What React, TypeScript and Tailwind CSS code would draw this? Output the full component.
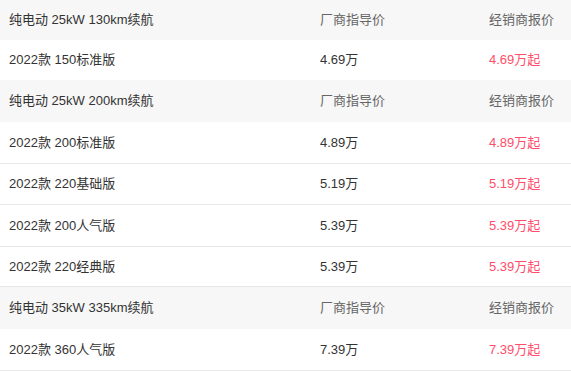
import React from "react";

/* ---------------- DATA ---------------- */
interface Trim {
  name: string;
  guide: string;
  dealer: string;
}

interface Group {
  title: string;
  h: string;
  trims: { trim: Trim; h: string }[];
}

const GROUPS: Group[] = [
  {
    title: "纯电动 25kW 130km续航",
    h: "h-[40px]",
    trims: [{ trim: { name: "2022款 150标准版", guide: "4.69万", dealer: "4.69万起" }, h: "h-[40px]" }],
  },
  {
    title: "纯电动 25kW 200km续航",
    h: "h-[42px]",
    trims: [
      { trim: { name: "2022款 200标准版", guide: "4.89万", dealer: "4.89万起" }, h: "h-[42px]" },
      { trim: { name: "2022款 220基础版", guide: "5.19万", dealer: "5.19万起" }, h: "h-[41px]" },
      { trim: { name: "2022款 200人气版", guide: "5.39万", dealer: "5.39万起" }, h: "h-[42px]" },
      { trim: { name: "2022款 220经典版", guide: "5.39万", dealer: "5.39万起" }, h: "h-[40px]" },
    ],
  },
  {
    title: "纯电动 35kW 335km续航",
    h: "h-[42px]",
    trims: [{ trim: { name: "2022款 360人气版", guide: "7.39万", dealer: "7.39万起" }, h: "h-[42px]" }],
  },
];

/* ---------------- COMPONENT ---------------- */
export default function App() {
  return (
    <div className="w-[571px] h-[371px] overflow-hidden bg-white text-[13px] font-['Liberation_Sans','Noto_Sans_CJK_SC',sans-serif]">
      {GROUPS.map((g) => (
        <div key={g.title}>
          {/* group header */}
          <div className={`${g.h} flex items-center bg-[#f7f7f7]`}>
            <div className="w-[320px] pl-[9px] text-[#333]">{g.title}</div>
            <div className="w-[169px] text-[#666]">厂商指导价</div>
            <div className="flex-1 text-[#666]">经销商报价</div>
          </div>

          {g.trims.map(({ trim, h }, i) => (
            <div
              key={trim.name}
              className={`${h} flex items-center ${
                i === 0 && g.trims.length === 1 && g.title.includes("130") ? "" : "border-b border-[#e8e8e8]"
              }`}
            >
              <div className="w-[320px] pl-[9px] text-[#333]">{trim.name}</div>
              <div className="w-[169px] text-[#333]">{trim.guide}</div>
              <div className="flex-1 text-[#ff4d6a]">{trim.dealer}</div>
            </div>
          ))}
        </div>
      ))}
    </div>
  );
}
